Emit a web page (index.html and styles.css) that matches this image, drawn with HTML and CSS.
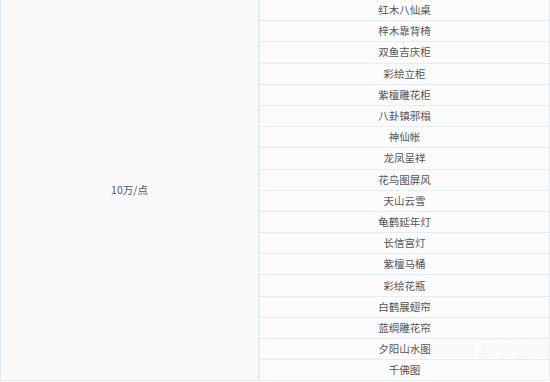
FILE: index.html
```html
<!DOCTYPE html>
<html lang="zh">
<head>
<meta charset="utf-8">
<link rel="stylesheet" href="styles.css">
</head>
<body>
<div class="wrap">
<table class="price">
<tbody>
<tr><td class="group" rowspan="18">10万/点</td><td class="item">红木八仙桌</td></tr>
<tr><td class="item">梓木靠背椅</td></tr>
<tr><td class="item">双鱼吉庆柜</td></tr>
<tr><td class="item">彩绘立柜</td></tr>
<tr><td class="item">紫檀雕花柜</td></tr>
<tr><td class="item">八卦镇邪榻</td></tr>
<tr><td class="item">神仙帐</td></tr>
<tr><td class="item">龙凤呈祥</td></tr>
<tr><td class="item">花鸟图屏风</td></tr>
<tr><td class="item">天山云雪</td></tr>
<tr><td class="item">龟鹤延年灯</td></tr>
<tr><td class="item">长信宫灯</td></tr>
<tr><td class="item">紫檀马桶</td></tr>
<tr><td class="item">彩绘花瓶</td></tr>
<tr><td class="item">白鹤展翅帘</td></tr>
<tr><td class="item">蓝绸雕花帘</td></tr>
<tr><td class="item">夕阳山水图</td></tr>
<tr><td class="item">千佛图</td></tr>
</tbody>
</table>
<div class="mark"><span class="mark-en">sina</span> 新浪游戏</div>
</div>
</body>
</html>
```
FILE: styles.css
```css
html, body {
  margin: 0;
  padding: 0;
  background: #ffffff;
}
.wrap {
  position: relative;
  width: 550px;
  height: 382px;
  overflow: hidden;
}
.price {
  width: 550px;
  border-collapse: collapse;
  margin-top: -1px;
  font-family: "Noto Sans CJK SC", "Noto Sans", sans-serif;
  font-size: 10.5px;
  color: #555555;
}
.price td {
  border: 1px solid #e4ecf4;
  text-align: center;
  padding: 0;
  height: 20.2px;
  line-height: 20px;
}
.group {
  width: 257px;
  background: #f9f9f9;
  border-right-width: 2px !important;
}
.item {
  background: #fbfbfb;
}
.mark {
  position: absolute;
  left: 432px;
  top: 336px;
  font-family: "Noto Sans CJK SC", sans-serif;
  font-size: 18px;
  font-style: italic;
  color: rgba(255, 255, 255, 0.75);
  text-shadow: 0 0 1px rgba(200, 210, 225, 0.35);
  white-space: nowrap;
}
.mark-en {
  font-family: "Liberation Sans", sans-serif;
  font-weight: bold;
  font-size: 21px;
}
```
